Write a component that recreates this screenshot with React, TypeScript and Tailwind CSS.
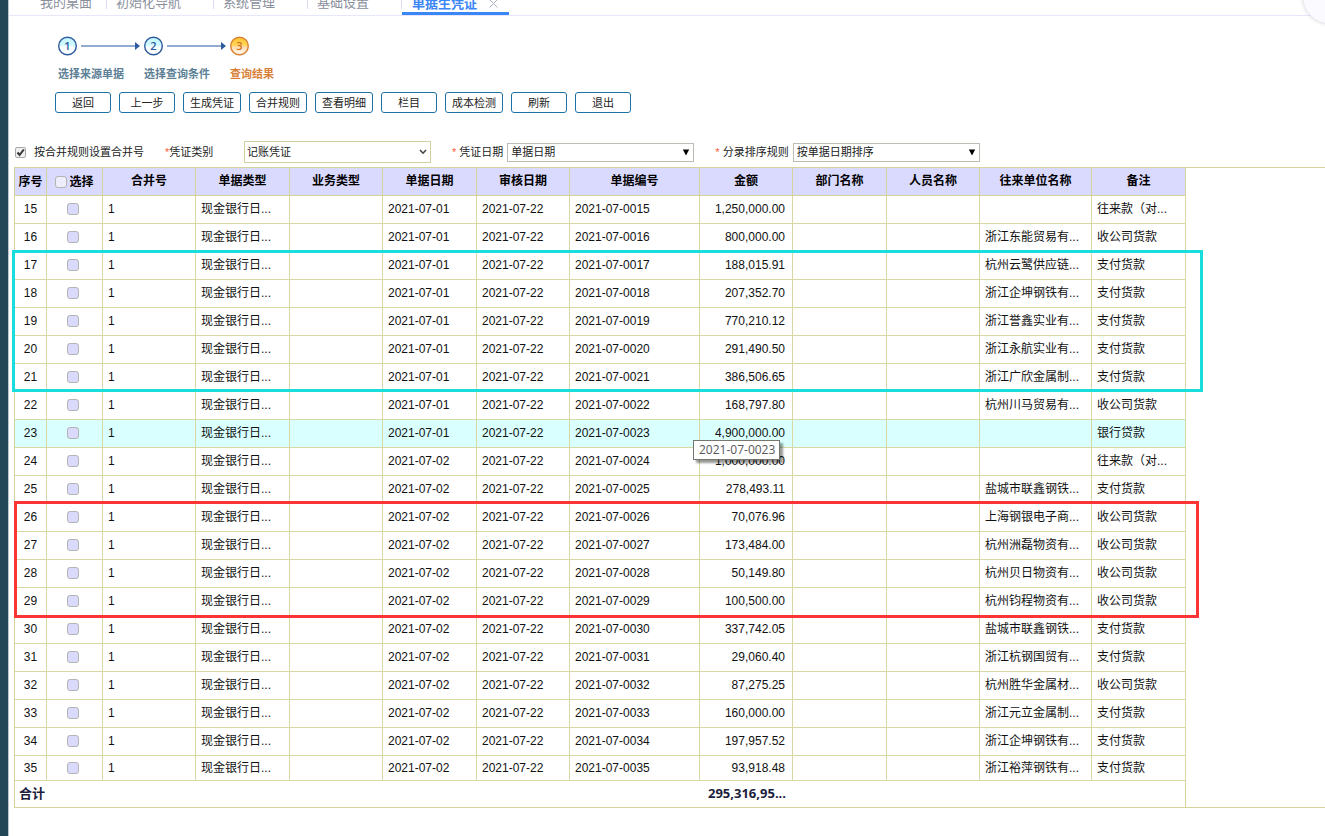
import { clsx } from 'clsx';

// ─── Data ───

type Voucher = {
  no: number;
  day: string;
  amount: string;
  partner: string;
  remark: string;
};

const IN = '收公司货款';
const OUT = '支付货款';

const vouchers: Voucher[] = [
  { no: 15, day: '01', amount: '1,250,000.00', partner: '', remark: '往来款（对...' },
  { no: 16, day: '01', amount: '800,000.00', partner: '浙江东能贸易有...', remark: IN },
  { no: 17, day: '01', amount: '188,015.91', partner: '杭州云鹭供应链...', remark: OUT },
  { no: 18, day: '01', amount: '207,352.70', partner: '浙江企坤钢铁有...', remark: OUT },
  { no: 19, day: '01', amount: '770,210.12', partner: '浙江誉鑫实业有...', remark: OUT },
  { no: 20, day: '01', amount: '291,490.50', partner: '浙江永航实业有...', remark: OUT },
  { no: 21, day: '01', amount: '386,506.65', partner: '浙江广欣金属制...', remark: OUT },
  { no: 22, day: '01', amount: '168,797.80', partner: '杭州川马贸易有...', remark: IN },
  { no: 23, day: '01', amount: '4,900,000.00', partner: '', remark: '银行贷款' },
  { no: 24, day: '02', amount: '1,000,000.00', partner: '', remark: '往来款（对...' },
  { no: 25, day: '02', amount: '278,493.11', partner: '盐城市联鑫钢铁...', remark: OUT },
  { no: 26, day: '02', amount: '70,076.96', partner: '上海钢银电子商...', remark: IN },
  { no: 27, day: '02', amount: '173,484.00', partner: '杭州洲磊物资有...', remark: IN },
  { no: 28, day: '02', amount: '50,149.80', partner: '杭州贝日物资有...', remark: IN },
  { no: 29, day: '02', amount: '100,500.00', partner: '杭州钧程物资有...', remark: IN },
  { no: 30, day: '02', amount: '337,742.05', partner: '盐城市联鑫钢铁...', remark: OUT },
  { no: 31, day: '02', amount: '29,060.40', partner: '浙江杭钢国贸有...', remark: OUT },
  { no: 32, day: '02', amount: '87,275.25', partner: '杭州胜华金属材...', remark: IN },
  { no: 33, day: '02', amount: '160,000.00', partner: '浙江元立金属制...', remark: OUT },
  { no: 34, day: '02', amount: '197,957.52', partner: '浙江企坤钢铁有...', remark: OUT },
  { no: 35, day: '02', amount: '93,918.48', partner: '浙江裕萍钢铁有...', remark: OUT },
];

const columns = [
  { title: '序号', width: 'w-8' },
  { title: '选择', width: 'w-14' },
  { title: '合并号', width: 'w-[93px]' },
  { title: '单据类型', width: 'w-[94px]' },
  { title: '业务类型', width: 'w-[93px]' },
  { title: '单据日期', width: 'w-[94px]' },
  { title: '审核日期', width: 'w-[93px]' },
  { title: '单据编号', width: 'w-[130px]' },
  { title: '金额', width: 'w-[93px]' },
  { title: '部门名称', width: 'w-[94px]' },
  { title: '人员名称', width: 'w-[93px]' },
  { title: '往来单位名称', width: 'w-[112px]' },
  { title: '备注', width: 'w-[94px]' },
];

const actions = ['返回', '上一步', '生成凭证', '合并规则', '查看明细', '栏目', '成本检测', '刷新', '退出'];

const HOVERED_NO = 23;

// ─── Tabs ───

const tabs = [
  { title: '我的桌面', box: 'w-[98px] pl-[31px]' },
  { title: '初始化导航', box: 'w-[107px] pl-[9px]' },
  { title: '系统管理', box: 'w-[94px] pl-[9px]' },
  { title: '基础设置', box: 'w-[94px] pl-[9px]' },
];

function TabBar() {
  return (
    <nav className="relative flex h-4 items-end overflow-hidden border-b border-[#e6e6fc] text-[13px] leading-5 text-[#8a8f9c]">
      {tabs.map((tab) => (
        <a key={tab.title} href="#" className={clsx('flex h-6 shrink-0 items-center', tab.box)}>
          <span className="flex-1">{tab.title}</span>
          <span className="h-3 w-px bg-[#dcdcf5]" />
        </a>
      ))}
      <div className="flex h-6 w-[107px] shrink-0 items-center border-b-3 border-[#3a86f5] pt-1 pl-2.5">
        <a href="#" className="font-bold text-[#3a86f5]">单据生凭证</a>
        <button type="button" aria-label="关闭" className="ml-3">
          <svg width="9" height="9" viewBox="0 0 9 9" className="stroke-[#a9b3c2]">
            <path d="M0.5 0.5 L8.5 8.5 M8.5 0.5 L0.5 8.5" />
          </svg>
        </button>
      </div>
    </nav>
  );
}

// ─── Steps ───

function Step({ n, label, current, last }: { n: number; label: string; current?: boolean; last?: boolean }) {
  return (
    <li className="w-[86px]">
      <svg width="86" height="20" viewBox="0 0 86 20" className="block">
        <defs>
          <linearGradient id={`step-${n}`} x1="0" y1="0" x2="0" y2="1">
            <stop offset="0" stopColor={current ? '#ffc62e' : '#c4f7ff'} />
            <stop offset="0.48" stopColor={current ? '#ffd65c' : '#d2faff'} />
            <stop offset="0.52" stopColor={current ? '#ffd9a0' : '#f4fdff'} />
            <stop offset="1" stopColor="#ffffff" />
          </linearGradient>
        </defs>
        <circle cx="9.5" cy="10" r="8.8" fill={`url(#step-${n})`} stroke={current ? '#d98032' : '#2e5a9e'} strokeWidth="1.4" />
        <text x="9.5" y="14" textAnchor="middle" className={clsx("font-['Open_Sans'] text-[11px] font-semibold", current ? 'fill-[#cf6f28]' : 'fill-[#2e5a9e]')}>
          {n}
        </text>
        {!last && (
          <>
            <path d="M23 10 H78" stroke="#6f8fc0" strokeWidth="1.4" />
            <path d="M77 6 L82 10 L77 14 Z" fill="#2e5a9e" />
          </>
        )}
      </svg>
      <span className={clsx('mt-2.5 block text-[11px] leading-4 font-bold', current ? 'text-[#d9803a]' : 'text-[#5d8096]')}>{label}</span>
    </li>
  );
}

// ─── Filters ───

function RequiredLabel({ htmlFor, children }: { htmlFor: string; children: string }) {
  return (
    <label htmlFor={htmlFor} className="shrink-0">
      <span className="text-[#ff5a3c]">*</span> {children}
    </label>
  );
}

function Picker({ id, value }: { id: string; value: string }) {
  return (
    <span className="relative flex">
      <select id={id} className="h-[19px] w-[187px] appearance-none border border-[#bdbdb5] bg-white px-[3px]">
        <option>{value}</option>
      </select>
      <svg viewBox="0 0 8 7" className="pointer-events-none absolute top-1.5 right-1 h-[7px] w-2">
        <path d="M0.8 0.5 H7.2 L4 6.5 Z" fill="#000" />
      </svg>
    </span>
  );
}

function FilterBar() {
  return (
    <div className="flex h-[22px] items-center pl-1.5 text-[11px] text-[#222]">
      <span className="relative flex">
        <input id="by-rule" type="checkbox" defaultChecked className="size-[11px] appearance-none rounded-xs border border-[#a8a8a8] bg-[#f0f0f0]" />
        <svg viewBox="0 0 11 11" className="pointer-events-none absolute inset-0 size-[11px]">
          <path d="M2.5 5.5 L4.6 8 L8.8 2.5" fill="none" stroke="#333" strokeWidth="2" />
        </svg>
      </span>
      <label htmlFor="by-rule" className="ml-2 w-[131px] shrink-0">按合并规则设置合并号</label>
      <label htmlFor="kind" className="w-[79px] shrink-0"><span className="text-[#ff5a3c]">*</span>凭证类别</label>
      <span className="relative flex">
        <select id="kind" className="h-[22px] w-[187px] appearance-none border border-[#cfcf9f] bg-white px-0.5">
          <option>记账凭证</option>
        </select>
        <svg viewBox="0 0 8 6" className="pointer-events-none absolute top-2 right-1 h-1.5 w-2">
          <path d="M1 1 L4 4.2 L7 1" fill="none" stroke="#444" strokeWidth="1.6" />
        </svg>
      </span>
      <span className="ml-[21px] flex items-center gap-1">
        <RequiredLabel htmlFor="date">凭证日期</RequiredLabel>
        <Picker id="date" value="单据日期" />
      </span>
      <span className="ml-[21px] flex items-center gap-1">
        <RequiredLabel htmlFor="sort">分录排序规则</RequiredLabel>
        <Picker id="sort" value="按单据日期排序" />
      </span>
    </div>
  );
}

// ─── Table ───

function RowCheckbox({ label }: { label: string }) {
  return <input type="checkbox" aria-label={label} className="size-3 appearance-none rounded-[3px] border border-[#b4b4b4] bg-[#dadafc] align-middle" />;
}

function VoucherRow({ row, last }: { row: Voucher; last: boolean }) {
  const line = clsx('border-r border-b border-[#d8d8a4]', !last && 'pb-0.5');
  const cell = clsx(line, 'truncate px-[5px]');
  return (
    <tr className={clsx(last ? 'h-[25px]' : 'h-7', row.no === HOVERED_NO && 'bg-[#d9ffff]')}>
      <td className={clsx(line, 'text-center')}>{row.no}</td>
      <td className={clsx(line, 'pr-1 text-center leading-3')}><RowCheckbox label={`选择 ${row.no}`} /></td>
      <td className={cell}>1</td>
      <td className={cell}>现金银行日...</td>
      <td className={cell} />
      <td className={cell}>2021-07-{row.day}</td>
      <td className={cell}>2021-07-22</td>
      <td className={cell}>2021-07-00{row.no}</td>
      <td className={clsx(line, 'pr-[7px] text-right')}>{row.amount}</td>
      <td className={cell} />
      <td className={cell} />
      <td className={cell}>{row.partner}</td>
      <td className={cell}>{row.remark}</td>
    </tr>
  );
}

function VoucherTable() {
  return (
    <table className="w-[1171px] table-fixed border-separate border-spacing-0 text-xs text-[#111]">
      <colgroup>
        {columns.map((col) => (
          <col key={col.title} className={col.width} />
        ))}
      </colgroup>
      <thead>
        <tr className="h-7 bg-[#dadafe] text-black">
          {columns.map((col, i) => (
            <th key={col.title} className={clsx('border-r border-b border-[#d3d39b] font-bold whitespace-nowrap', i > 1 && 'pb-0.5')}>
              {i === 1 ? (
                <label className="flex items-center justify-center gap-0.5">
                  <input type="checkbox" className="size-3 appearance-none rounded-[3px] border border-[#b4b4b4] bg-[#ededfb]" />
                  {col.title}
                </label>
              ) : (
                col.title
              )}
            </th>
          ))}
        </tr>
      </thead>
      <tbody>
        {vouchers.map((row, i) => (
          <VoucherRow key={row.no} row={row} last={i === vouchers.length - 1} />
        ))}
      </tbody>
      <tfoot>
        <tr className="h-[26px] text-[13px] font-bold text-[#1c1c3c]">
          <td colSpan={8} className="pl-1">合计</td>
          <td className="pr-[7px] text-right font-['Open_Sans'] whitespace-nowrap">295,316,95...</td>
          <td colSpan={4} className="border-r border-[#d3d39b]" />
        </tr>
      </tfoot>
    </table>
  );
}

export default function App() {
  return (
    <div className="flex min-h-screen overflow-hidden bg-white font-['Liberation_Sans','Noto_Sans_CJK_SC',sans-serif]">
      <aside className="w-[9px] shrink-0 border-r border-[#b9c6cc] bg-[#234757]" />
      <main className="relative min-w-0 flex-1">
        <TabBar />
        <div className="absolute -top-8 -right-[34px] size-14 rounded-full bg-[#fafaff] shadow-[0_0_4px_#c8c8d4]" />

        <ol className="mt-5 flex pl-[49px]">
          <Step n={1} label="选择来源单据" />
          <Step n={2} label="选择查询条件" />
          <Step n={3} label="查询结果" current last />
        </ol>

        <div className="mt-2.5 flex gap-2 pl-[46px]">
          {actions.map((name) => (
            <button
              key={name}
              type="button"
              className={clsx('h-[21px] rounded-[3px] border border-[#1b72a4] bg-white text-[11px] leading-4 text-[#222]', name.length > 3 ? 'w-[58px]' : 'w-14')}
            >
              {name}
            </button>
          ))}
        </div>

        <div className="mt-7">
          <FilterBar />
        </div>

        <div className="relative mt-1 ml-[5px] border-y border-l border-[#d3d39b]">
          <VoucherTable />

          {/* marked groups of rows */}
          <div className="pointer-events-none absolute top-[82px] -left-[3px] h-[142px] w-[1191px] border-3 border-[#19dddd]" />
          <div className="pointer-events-none absolute top-[333px] -left-px h-[117px] w-[1185px] border-3 border-[#fb3535]" />

          <div role="tooltip" className="absolute top-[272px] left-[678px] h-5 w-[87px] border border-[#76766c] bg-white pl-[5px] font-['Open_Sans'] text-xs leading-[18px] text-[#575757] shadow-[3px_3px_2px_#00000066]">
            2021-07-0023
          </div>
        </div>
      </main>
    </div>
  );
}
